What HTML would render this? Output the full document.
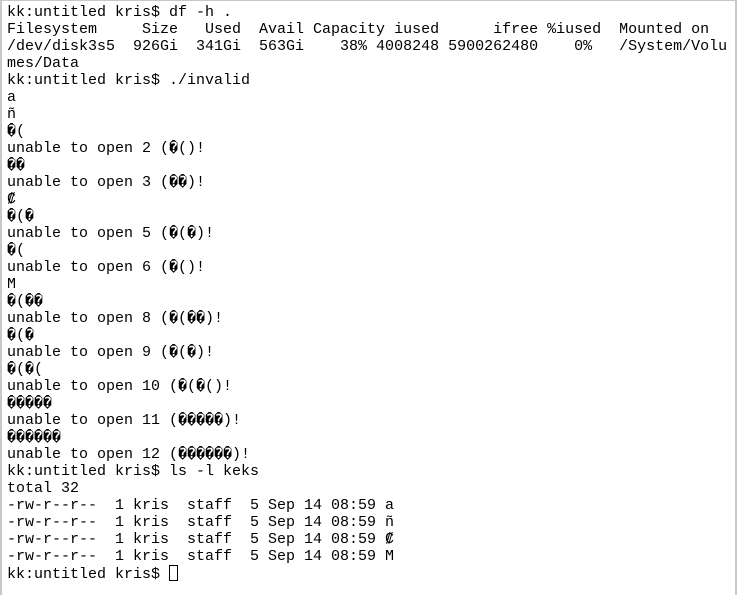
<!DOCTYPE html>
<html><head><meta charset="utf-8"><style>
html,body{margin:0;padding:0;background:#fff;}
body{width:737px;height:594px;overflow:hidden;position:relative;}
.frame{position:absolute;left:0;top:0;width:733px;height:594px;border-left:2px solid #c8c8c8;border-right:2px solid #c8c8c8;border-top:1px solid #c8c8c8;}
pre{position:absolute;left:7px;top:4px;margin:0;font-family:"Liberation Mono","DejaVu Sans Mono",monospace;font-size:15px;line-height:17px;color:#000;white-space:pre;}
.r{display:inline-block;width:9px;font-family:"DejaVu Sans Mono",monospace;font-size:14px;font-weight:bold;text-align:center;overflow:hidden;vertical-align:top;}
.cur{display:inline-block;width:7px;height:14px;border:1px solid #000;vertical-align:-3px;}
</style></head><body><div class="frame"></div>
<pre>kk:untitled kris$ df -h .
Filesystem     Size   Used  Avail Capacity iused      ifree %iused  Mounted on
/dev/disk3s5  926Gi  341Gi  563Gi    38% 4008248 5900262480    0%   /System/Volu
mes/Data
kk:untitled kris$ ./invalid
a
ñ
<span class="r">�</span>(
unable to open 2 (<span class="r">�</span>()!
<span class="r">�</span><span class="r">�</span>
unable to open 3 (<span class="r">�</span><span class="r">�</span>)!
₡
<span class="r">�</span>(<span class="r">�</span>
unable to open 5 (<span class="r">�</span>(<span class="r">�</span>)!
<span class="r">�</span>(
unable to open 6 (<span class="r">�</span>()!
Ϻ
<span class="r">�</span>(<span class="r">�</span><span class="r">�</span>
unable to open 8 (<span class="r">�</span>(<span class="r">�</span><span class="r">�</span>)!
<span class="r">�</span>(<span class="r">�</span>
unable to open 9 (<span class="r">�</span>(<span class="r">�</span>)!
<span class="r">�</span>(<span class="r">�</span>(
unable to open 10 (<span class="r">�</span>(<span class="r">�</span>()!
<span class="r">�</span><span class="r">�</span><span class="r">�</span><span class="r">�</span><span class="r">�</span>
unable to open 11 (<span class="r">�</span><span class="r">�</span><span class="r">�</span><span class="r">�</span><span class="r">�</span>)!
<span class="r">�</span><span class="r">�</span><span class="r">�</span><span class="r">�</span><span class="r">�</span><span class="r">�</span>
unable to open 12 (<span class="r">�</span><span class="r">�</span><span class="r">�</span><span class="r">�</span><span class="r">�</span><span class="r">�</span>)!
kk:untitled kris$ ls -l keks
total 32
-rw-r--r--  1 kris  staff  5 Sep 14 08:59 a
-rw-r--r--  1 kris  staff  5 Sep 14 08:59 ñ
-rw-r--r--  1 kris  staff  5 Sep 14 08:59 ₡
-rw-r--r--  1 kris  staff  5 Sep 14 08:59 Ϻ
kk:untitled kris$ <span class="cur"></span></pre>
</body></html>
